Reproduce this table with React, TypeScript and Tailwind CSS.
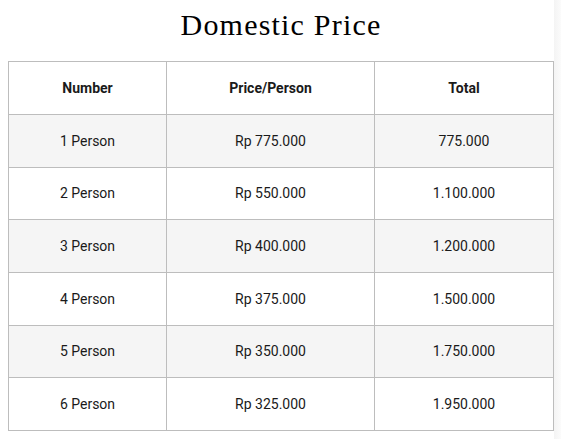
const rows = [
  { n: '1 Person', p: 'Rp 775.000', t: '775.000', h: 'h-[53px]' },
  { n: '2 Person', p: 'Rp 550.000', t: '1.100.000', h: 'h-[52px]' },
  { n: '3 Person', p: 'Rp 400.000', t: '1.200.000', h: 'h-[53px]' },
  { n: '4 Person', p: 'Rp 375.000', t: '1.500.000', h: 'h-[53px]' },
  { n: '5 Person', p: 'Rp 350.000', t: '1.750.000', h: 'h-[52px]' },
  { n: '6 Person', p: 'Rp 325.000', t: '1.950.000', h: 'h-[53px]' },
];

export default function App() {
  return (
    <div className="flex w-[561px] h-[439px] bg-white overflow-hidden">
      <div className="flex-1 pl-2">
        <h1 className="h-[61px] pt-[5px] text-center text-[30px] leading-[40px] tracking-[1.2px] text-black font-['Liberation_Serif',serif]">
          Domestic Price
        </h1>
        <table className="w-[545px] border-collapse table-fixed font-['Roboto',sans-serif] text-[14px] text-[#1a1a1a]">
          <colgroup>
            <col className="w-[158px]" />
            <col className="w-[208px]" />
            <col className="w-[179px]" />
          </colgroup>
          <thead>
            <tr className="h-[53px]">
              <th className="border border-[#bdbdbd] font-bold text-center">Number</th>
              <th className="border border-[#bdbdbd] font-bold text-center">Price/Person</th>
              <th className="border border-[#bdbdbd] font-bold text-center">Total</th>
            </tr>
          </thead>
          <tbody>
            {rows.map((r, i) => (
              <tr key={r.n} className={`${r.h} ${i % 2 === 0 ? 'bg-[#f5f5f5]' : 'bg-white'}`}>
                <td className="border border-[#bdbdbd] text-center">{r.n}</td>
                <td className="border border-[#bdbdbd] text-center">{r.p}</td>
                <td className="border border-[#bdbdbd] text-center">{r.t}</td>
              </tr>
            ))}
          </tbody>
        </table>
      </div>
      <div className="w-[8px] bg-gradient-to-r from-[#f4f4f4] to-[#fbfbfb]" />
    </div>
  );
}
